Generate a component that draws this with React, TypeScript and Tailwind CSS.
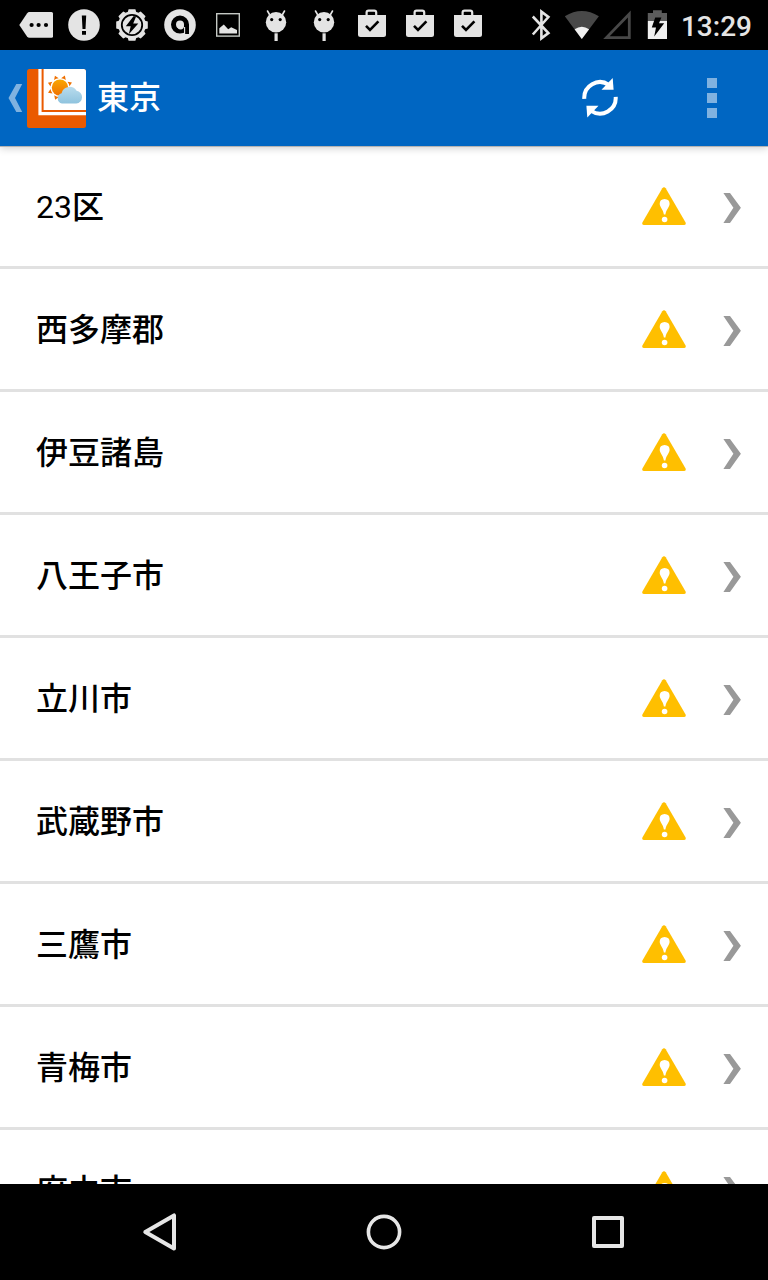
/**
 * Weather app: area list for one prefecture
 */

import type { ReactNode } from 'react';

const areas = [
  { prefix: '23', name: '区' },
  { name: '西多摩郡' },
  { name: '伊豆諸島' },
  { name: '八王子市' },
  { name: '立川市' },
  { name: '武蔵野市' },
  { name: '三鷹市' },
  { name: '青梅市' },
  { name: '府中市' },
];

const EIGHTHS = [0, 45, 90, 135, 180, 225, 270, 315];

function StatusIcon({ children }: { children: ReactNode }) {
  return (
    <svg viewBox="0 0 48 50" className="h-[50px] w-12 shrink-0 fill-[#e4e4e4]" aria-hidden="true">
      {children}
    </svg>
  );
}

function DebugHead() {
  return (
    <StatusIcon>
      <circle cx="24" cy="22.3" r="10.2" />
      <path d="M17.5 14.5L15.5 11M30.5 14.5L32.5 11" stroke="#e4e4e4" strokeWidth="1.6" strokeLinecap="round" />
      <circle cx="19.7" cy="19.6" r="1.6" fill="#000" />
      <circle cx="28.2" cy="19.6" r="1.6" fill="#000" />
      <rect x="22.5" y="33.3" width="3.2" height="7.7" />
    </StatusIcon>
  );
}

function StoreBag() {
  return (
    <StatusIcon>
      <path d="M18.6 16V12.6Q18.6 10.6 20.6 10.6H26.2Q28.2 10.6 28.2 12.6V16" fill="none" stroke="#e4e4e4" strokeWidth="2.2" />
      <path d="M10 15H38V34.5Q38 37 35.5 37H12.5Q10 37 10 34.5Z" />
      <path d="M18 25.8L22 29.8L30.4 21.4" fill="none" stroke="#000" strokeWidth="2.6" />
    </StatusIcon>
  );
}

function StatusBar() {
  return (
    <div className="flex h-[50px] shrink-0 items-center justify-between overflow-hidden bg-black px-3">
      <div className="flex">
        <StatusIcon>
          <path d="M7.3 25L15 13.4Q16 12 17.6 12H39.5Q41 12 41 13.5V36.3Q41 37.8 39.5 37.8H17.6Q16 37.8 15 36.4Z" />
          <g fill="#000">
            <circle cx="19.6" cy="25" r="2.1" />
            <circle cx="26.6" cy="25" r="2.1" />
            <circle cx="34" cy="25" r="2.1" />
          </g>
        </StatusIcon>
        <StatusIcon>
          <circle cx="24" cy="25" r="15.8" />
          <path d="M21.8 15.4H26.2L25.5 29H22.5ZM22 31H26V34.8H22Z" fill="#000" />
        </StatusIcon>
        <StatusIcon>
          <circle cx="24" cy="25" r="13.8" />
          {EIGHTHS.map((deg) => (
            <path key={deg} d="M19.8 12L20.6 9.2H27.4L28.2 12Z" transform={`rotate(${deg} 24 25)`} />
          ))}
          <circle cx="24" cy="25" r="10.2" fill="none" stroke="#000" strokeWidth="1.8" />
          <path d="M25.5 16.2L17.8 26.3H22.7L20.8 34.2L30.3 23.4H25.2L28.2 16.2Z" fill="#000" />
        </StatusIcon>
        <StatusIcon>
          <circle cx="24" cy="25" r="15.8" />
          <circle cx="24" cy="24.6" r="6.5" fill="none" stroke="#000" strokeWidth="5" />
          <path d="M29 24.5H33V34H29Z" fill="#000" />
          <circle cx="24.6" cy="26" r="3.4" />
          <path d="M28.6 27V35" stroke="#e4e4e4" strokeWidth="1.1" />
        </StatusIcon>
        <StatusIcon>
          <rect x="12.7" y="13.7" width="22.6" height="22.4" fill="none" stroke="#c4c8c4" strokeWidth="1.4" />
          <path d="M15.3 33.5V28.2L19.8 24.6L24.2 29.2L27.2 27.2L33 30V33.5Z" />
        </StatusIcon>
        <DebugHead />
        <DebugHead />
        <StoreBag />
        <StoreBag />
        <StoreBag />
      </div>

      <div className="flex items-center pr-1">
        <svg viewBox="0 0 144 50" className="h-[50px] w-36 shrink-0" aria-hidden="true">
          <path
            d="M3.8 16.5L19.4 33L12.4 38.3V11.7L19.4 17L3.8 34.5"
            fill="none"
            stroke="#e4e4e4"
            strokeWidth="2.6"
          />
          <path d="M35.8 16.2Q52.8 5.6 69.9 16.2L52.8 39Z" fill="#484848" />
          <path d="M45.6 29.3Q52.8 24.2 60.1 29.3L52.8 39Z" fill="#f0f0f0" />
          <path d="M77.5 37.6H100.3V14Z" fill="none" stroke="#484848" strokeWidth="2.8" />
          <path d="M118.8 21V12.9H124V10.2H132.8V12.9H138V21Z" fill="#5c5c5c" />
          <path d="M118.8 21H138V39H118.8Z" fill="#f0f0f0" />
          <path d="M126.2 17.6H132.4L130 23.3H135.2L125.2 36.4L127 27.6H122.8Z" fill="#000" />
        </svg>
        <time className="pt-1 pl-2 font-['Roboto',sans-serif] text-[28px] leading-8 font-medium text-[#e4e4e4]">13:29</time>
      </div>
    </div>
  );
}

function AppLogo() {
  return (
    <svg viewBox="0 0 59 59" className="size-[59px]" aria-hidden="true">
      <defs>
        <linearGradient id="sun" x1="0" y1="0" x2="0" y2="1">
          <stop offset="0" stopColor="#f9a800" />
          <stop offset="1" stopColor="#f07000" />
        </linearGradient>
        <linearGradient id="cloud" x1="0" y1="0" x2="0" y2="1">
          <stop offset="0" stopColor="#b9dced" />
          <stop offset="1" stopColor="#8fc3de" />
        </linearGradient>
      </defs>
      <rect width="59" height="59" rx="2.5" fill="#ea5a00" />
      <path d="M11.4 0H56.5Q59 0 59 2.5V46.3H11.4Z" fill="#fff" />
      <path d="M15.6 0V42H59" fill="none" stroke="#ea5a00" strokeWidth="2" />
      <g transform="translate(33 18.6)" fill="#ee7000">
        {EIGHTHS.map((deg) => (
          <path key={deg} d="M-2.5 -9.2L0 -13L2.5 -9.2Q0 -10 -2.5 -9.2Z" transform={`rotate(${deg + 22})`} />
        ))}
        <circle r="8.2" fill="url(#sun)" />
      </g>
      <path
        d="M35 34.5A5.3 5.3 0 0 1 34.6 24.2A8.2 8.2 0 0 1 49.6 21.8A6.4 6.4 0 0 1 49.3 34.5Z"
        fill="url(#cloud)"
      />
    </svg>
  );
}

function Header() {
  return (
    <header className="relative z-10 flex h-24 shrink-0 items-center justify-between bg-[#0066c2] pl-2 shadow-[0_1px_0_#b4b4b4,0_2px_8px_rgba(0,0,0,0.2)]">
      <div className="flex items-center">
        <button type="button" aria-label="戻る" className="flex items-center gap-1">
          <svg viewBox="0 0 15 30" className="h-[30px] w-[15px]" aria-hidden="true">
            <path d="M8.3 1H14.2L7 15L14.2 29H8.3L0.5 15Z" fill="#80b2e0" />
          </svg>
          <AppLogo />
        </button>
        <h1 className="ml-[11px] font-['Roboto','Noto_Sans_CJK_JP',sans-serif] text-[32px] leading-[48px] font-medium text-white">
          東京
        </h1>
      </div>
      <div className="flex">
        <button type="button" aria-label="更新" className="flex h-24 w-28 items-center justify-center">
          <svg viewBox="0 0 40 40" className="size-10" aria-hidden="true">
            <g id="arrow">
              <path d="M4.3 20.8A15.7 15.7 0 0 1 28.8 6.8" fill="none" stroke="#fff" strokeWidth="4" />
              <path d="M32.7 0L33.6 11.8H21.5Z" fill="#fff" />
            </g>
            <use href="#arrow" transform="rotate(180 20 19.8)" />
          </svg>
        </button>
        <button type="button" aria-label="メニュー" className="flex h-24 w-28 flex-col items-center justify-center gap-[5px]">
          <span className="size-[10px] bg-[#80b2e0]" />
          <span className="size-[10px] bg-[#80b2e0]" />
          <span className="size-[10px] bg-[#80b2e0]" />
        </button>
      </div>
    </header>
  );
}

function AreaRow({ prefix, name }: { prefix?: string; name: string }) {
  return (
    <li className="border-b-3 border-[#e1e1e1]">
      <a href="#" className="flex h-[120px] items-center pr-[27px] pl-9">
        <span className="flex-1 pt-0.5 text-[32px] leading-[48px] font-medium text-black">
          {prefix && <span className="font-normal">{prefix}</span>}
          {name}
        </span>
        <svg viewBox="0 0 44 38" className="h-[38px] w-11" aria-hidden="true">
          <path
            d="M20.3 1.2Q22 -0.8 23.7 1.2L43.6 35.4Q44.2 38 42 38H2Q-0.2 38 0.4 35.4Z"
            fill="#ffbf00"
          />
          <path d="M22.6 12Q27.6 12.3 27.6 16.8C27.6 20 24.2 22.5 23.4 27.5H21.9C21.2 22.5 17.7 20 17.7 16.8Q17.7 12.3 22.6 12Z" fill="#fff" />
          <circle cx="22.6" cy="32.5" r="2.8" fill="#fff" />
        </svg>
        <svg viewBox="0 0 18 34" className="ml-[37px] h-[34px] w-[18px]" aria-hidden="true">
          <path d="M0.4 4H7L17.9 18.7L7 34H0.4L10.4 18.7Z" fill="#999" />
        </svg>
      </a>
    </li>
  );
}

function NavBar() {
  return (
    <nav className="flex h-24 shrink-0 bg-black px-12">
      <button type="button" aria-label="戻る" className="flex flex-1 items-center justify-center">
        <svg viewBox="0 0 48 48" className="size-12" fill="none" stroke="#e6e6e6" strokeWidth="4" strokeLinejoin="round">
          <path d="M9.3 24L38 7.4V40.6Z" />
        </svg>
      </button>
      <button type="button" aria-label="ホーム" className="flex flex-1 items-center justify-center">
        <svg viewBox="0 0 48 48" className="size-12" fill="none" stroke="#e6e6e6" strokeWidth="3.6">
          <circle cx="24" cy="24" r="15.6" />
        </svg>
      </button>
      <button type="button" aria-label="最近使ったアプリ" className="flex flex-1 items-center justify-center">
        <svg viewBox="0 0 48 48" className="size-12" fill="none" stroke="#e6e6e6" strokeWidth="4" strokeLinejoin="round">
          <rect x="10" y="10" width="28" height="28" />
        </svg>
      </button>
    </nav>
  );
}

export default function App() {
  return (
    <div className="flex h-screen w-full flex-col bg-white font-['Roboto','Noto_Sans_CJK_JP',sans-serif]" lang="ja">
      <StatusBar />
      <Header />
      <main className="min-h-0 flex-1 overflow-hidden">
        <ul>
          {areas.map((area) => (
            <AreaRow key={area.name} prefix={area.prefix} name={area.name} />
          ))}
        </ul>
      </main>
      <NavBar />
    </div>
  );
}
